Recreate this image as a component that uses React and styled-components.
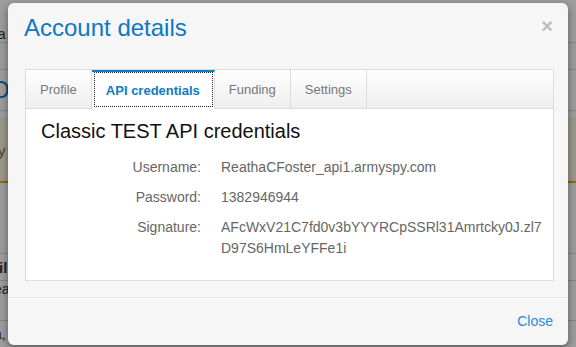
import React from 'react';
import styled, { createGlobalStyle } from 'styled-components';

const GlobalStyle = createGlobalStyle`
  html, body {
    margin: 0;
    padding: 0;
  }
  body {
    font-family: "Liberation Sans", Arial, sans-serif;
    background: #fff;
    overflow: hidden;
  }
`;

const Screen = styled.div`
  position: relative;
  width: 576px;
  height: 347px;
  overflow: hidden;
  background: #fff;
`;

// page that sits behind the dialog
const Page = styled.div`
  color: #333;
  font-size: 14px;
`;

const PageRow = styled.div`
  box-sizing: border-box;
  height: ${props => props.height}px;
  display: flex;
  align-items: ${props => props.align || 'center'};
  border-bottom: 1px solid ${props => (props.line ? '#d8d8d8' : 'transparent')};
  font-weight: ${props => (props.bold ? 'bold' : 'normal')};
  color: ${props => props.color || '#333'};
  font-size: ${props => props.size || 14}px;
`;

const PageWord = styled.span`
  margin-left: ${props => props.shift || -14}px;
  white-space: nowrap;
`;

const PageAlert = styled.div`
  box-sizing: border-box;
  height: 65px;
  margin-top: 7px;
  display: flex;
  align-items: center;
  background: #fcf8e3;
  border-top: 1px solid #fbeed5;
  border-bottom: 2px solid #e0a800;
  color: #8a6d3b;
  font-size: 15px;
`;

const Overlay = styled.div`
  position: absolute;
  inset: 0;
  background: rgba(0, 0, 0, 0.38);
`;

const Modal = styled.div`
  position: absolute;
  top: 3px;
  left: 8px;
  width: 560px;
  box-sizing: border-box;
  background: #f6f6f6;
  border-radius: 6px;
  box-shadow: 0 3px 9px rgba(0, 0, 0, 0.45);
`;

const ModalHeader = styled.div`
  display: flex;
  justify-content: space-between;
  align-items: flex-start;
  padding: 12px 15px 0 16px;
`;

const ModalTitle = styled.h3`
  margin: 0;
  font-size: 24px;
  line-height: 26px;
  font-weight: normal;
  color: #0c78c4;
`;

const CloseX = styled.span`
  margin-top: 1px;
  font-size: 20px;
  line-height: 20px;
  font-weight: bold;
  color: #bdbdbd;
  cursor: pointer;
`;

const Panel = styled.div`
  margin: 28px 14px 0 17px;
  border: 1px solid #dcdcdc;
  background: #fff;
`;

const TabBar = styled.div`
  display: flex;
  height: 39px;
  box-sizing: border-box;
  background: linear-gradient(#ffffff, #eeeeee);
  border-bottom: 1px solid #dcdcdc;
`;

const Tab = styled.div`
  box-sizing: border-box;
  display: flex;
  align-items: center;
  padding: 0 14px;
  height: ${props => (props.active ? '39px' : '38px')};
  margin-bottom: ${props => (props.active ? '-1px' : '0')};
  border-right: 1px solid #dcdcdc;
  border-top: ${props => (props.active ? '2px solid #0d7bc5' : 'none')};
  background: ${props => (props.active ? '#fff' : 'transparent')};
  color: ${props => (props.active ? '#0d7bc5' : '#777')};
  font-weight: ${props => (props.active ? 'bold' : 'normal')};
  font-size: 13px;
  outline: ${props => (props.active ? '1px dotted #222' : 'none')};
  outline-offset: -3px;
  cursor: pointer;
`;

const PanelBody = styled.div`
  padding: 11px 15px 21px;
`;

const SectionTitle = styled.h4`
  margin: 0 0 15px;
  font-size: 20px;
  line-height: 22px;
  font-weight: normal;
  color: #111;
`;

const Details = styled.div`
  display: grid;
  grid-template-columns: 160px 324px;
  column-gap: 20px;
  row-gap: 9px;
  font-size: 14px;
  line-height: 21px;
  color: #666;
`;

const Label = styled.div`
  text-align: right;
`;

const Value = styled.div`
  word-break: break-all;
`;

const ModalBody = styled.div`
  padding-bottom: 16px;
`;

const ModalFooter = styled.div`
  border-top: 1px solid #e8e8e8;
  box-shadow: inset 0 1px 0 #fff;
  padding: 13px 15px 14px;
  text-align: right;
`;

const CloseLink = styled.a`
  font-size: 14px;
  line-height: 20px;
  color: #2a8ad4;
  text-decoration: none;
  cursor: pointer;
`;

const tabs = ['Profile', 'API credentials', 'Funding', 'Settings'];

const credentials = [
  { label: 'Username:', value: 'ReathaCFoster_api1.armyspy.com' },
  { label: 'Password:', value: '1382946944' },
  { label: 'Signature:', value: 'AFcWxV21C7fd0v3bYYYRCpSSRl31Amrtcky0J.zl7D97S6HmLeYFFe1i' }
];

export default function App() {
  return (
    <Screen>
      <GlobalStyle />
      <Page>
        <PageRow height={43} line align="flex-end"><PageWord shift={-10}>ba</PageWord></PageRow>
        <PageRow height={27} line />
        <PageRow height={41} line color="#0f7ac6" size={24}><PageWord shift={-9}>O</PageWord></PageRow>
        <PageAlert><PageWord shift={-2}>y</PageWord></PageAlert>
        <PageRow height={71} line align="flex-end" color="#2a8ad4" size={13}><PageWord shift={-3}>:</PageWord></PageRow>
        <PageRow height={27} line bold size={15}><PageWord shift={-1}>il</PageWord></PageRow>
        <PageRow height={40} line align="flex-start"><PageWord shift={-6}>ea</PageWord></PageRow>
        <PageRow height={27}><PageWord shift={-6}>a,</PageWord></PageRow>
      </Page>
      <Overlay />
      <Modal>
        <ModalHeader>
          <ModalTitle>Account details</ModalTitle>
          <CloseX>×</CloseX>
        </ModalHeader>
        <ModalBody>
          <Panel>
            <TabBar>
              {tabs.map(tab => (
                <Tab key={tab} active={tab === 'API credentials'}>{tab}</Tab>
              ))}
            </TabBar>
            <PanelBody>
              <SectionTitle>Classic TEST API credentials</SectionTitle>
              <Details>
                {credentials.map(item => (
                  <React.Fragment key={item.label}>
                    <Label>{item.label}</Label>
                    <Value>{item.value}</Value>
                  </React.Fragment>
                ))}
              </Details>
            </PanelBody>
          </Panel>
        </ModalBody>
        <ModalFooter>
          <CloseLink>Close</CloseLink>
        </ModalFooter>
      </Modal>
    </Screen>
  );
}
